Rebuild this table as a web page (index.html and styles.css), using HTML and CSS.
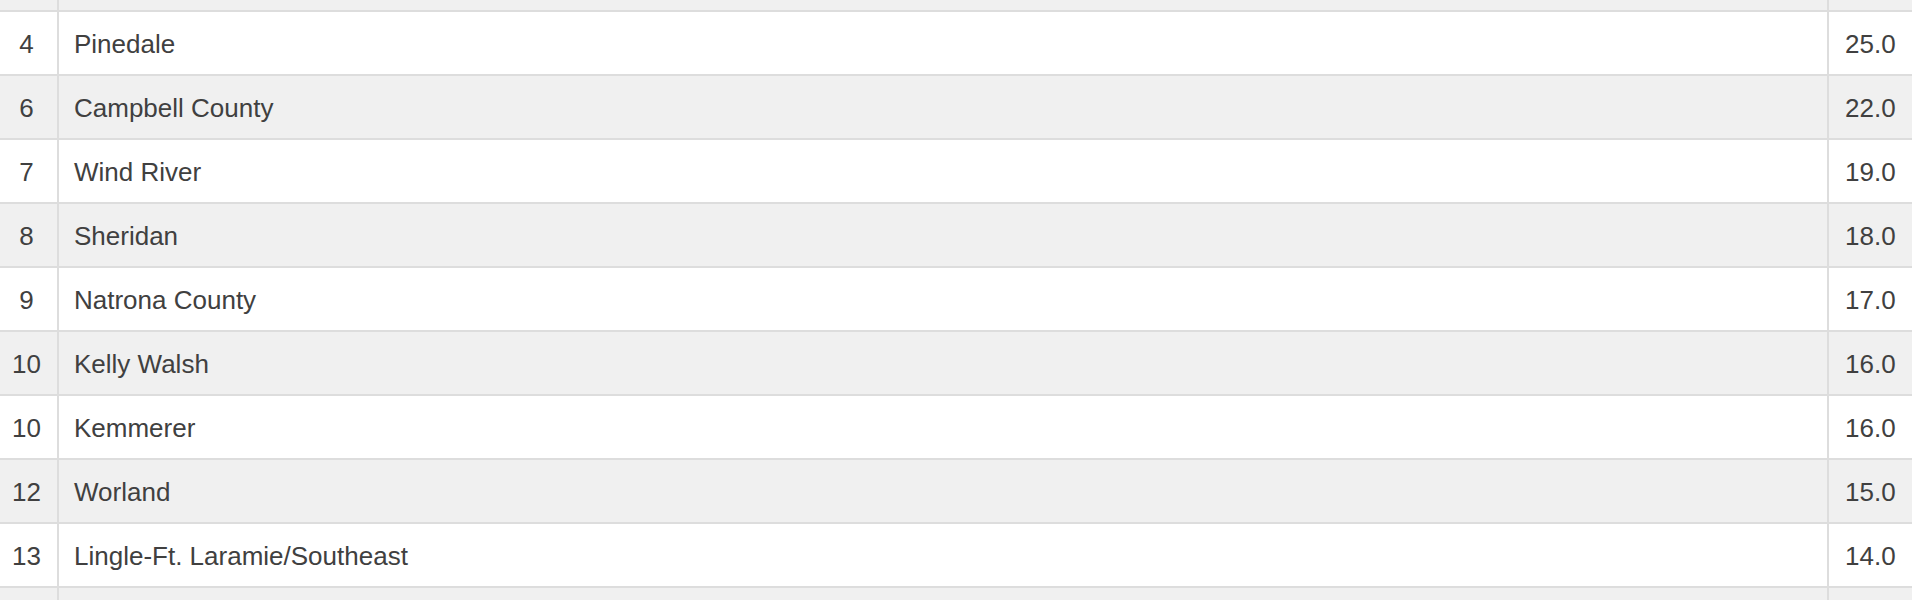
FILE: index.html
```html
<!DOCTYPE html>
<html>
<head>
<meta charset="utf-8">
<link rel="stylesheet" href="styles.css">
</head>
<body>
<table class="standings">
  <colgroup>
    <col class="col-rank">
    <col class="col-name">
    <col class="col-score">
  </colgroup>
  <tbody>
    <tr class="row-partial stripe"><td class="rank"></td><td class="name"></td><td class="score"></td></tr>
    <tr><td class="rank">4</td><td class="name">Pinedale</td><td class="score">25.0</td></tr>
    <tr class="stripe"><td class="rank">6</td><td class="name">Campbell County</td><td class="score">22.0</td></tr>
    <tr><td class="rank">7</td><td class="name">Wind River</td><td class="score">19.0</td></tr>
    <tr class="stripe"><td class="rank">8</td><td class="name">Sheridan</td><td class="score">18.0</td></tr>
    <tr><td class="rank">9</td><td class="name">Natrona County</td><td class="score">17.0</td></tr>
    <tr class="stripe"><td class="rank">10</td><td class="name">Kelly Walsh</td><td class="score">16.0</td></tr>
    <tr><td class="rank">10</td><td class="name">Kemmerer</td><td class="score">16.0</td></tr>
    <tr class="stripe"><td class="rank">12</td><td class="name">Worland</td><td class="score">15.0</td></tr>
    <tr><td class="rank">13</td><td class="name">Lingle-Ft. Laramie/Southeast</td><td class="score">14.0</td></tr>
    <tr class="stripe"><td class="rank"></td><td class="name"></td><td class="score"></td></tr>
  </tbody>
</table>
</body>
</html>
```

FILE: styles.css
```css
html, body {
  margin: 0;
  padding: 0;
  background: #ffffff;
  overflow: hidden;
}

.standings {
  width: 1912px;
  table-layout: fixed;
  border-collapse: separate;
  border-spacing: 0;
  font-family: "Liberation Sans", Arial, Helvetica, sans-serif;
  font-size: 26px;
  color: #404040;
}

.col-rank { width: 59px; }
.col-score { width: 85px; }

.standings td {
  padding: 2px 0 0 0;
  height: 60px;
  line-height: 60px;
  border-top: 2px solid #dddddd;
  white-space: nowrap;
  overflow: hidden;
  vertical-align: middle;
}

.standings tr.stripe td {
  background: #f0f0f0;
}

.standings tr.row-partial td {
  padding-top: 0;
  height: 10px;
  line-height: 10px;
  border-top: none;
}

.standings td.rank {
  text-align: center;
  padding-right: 4px;
  border-right: 2px solid #dddddd;
}

.standings td.name {
  padding-left: 15px;
}

.standings td.score {
  padding-left: 16px;
  border-left: 2px solid #dddddd;
}
```
